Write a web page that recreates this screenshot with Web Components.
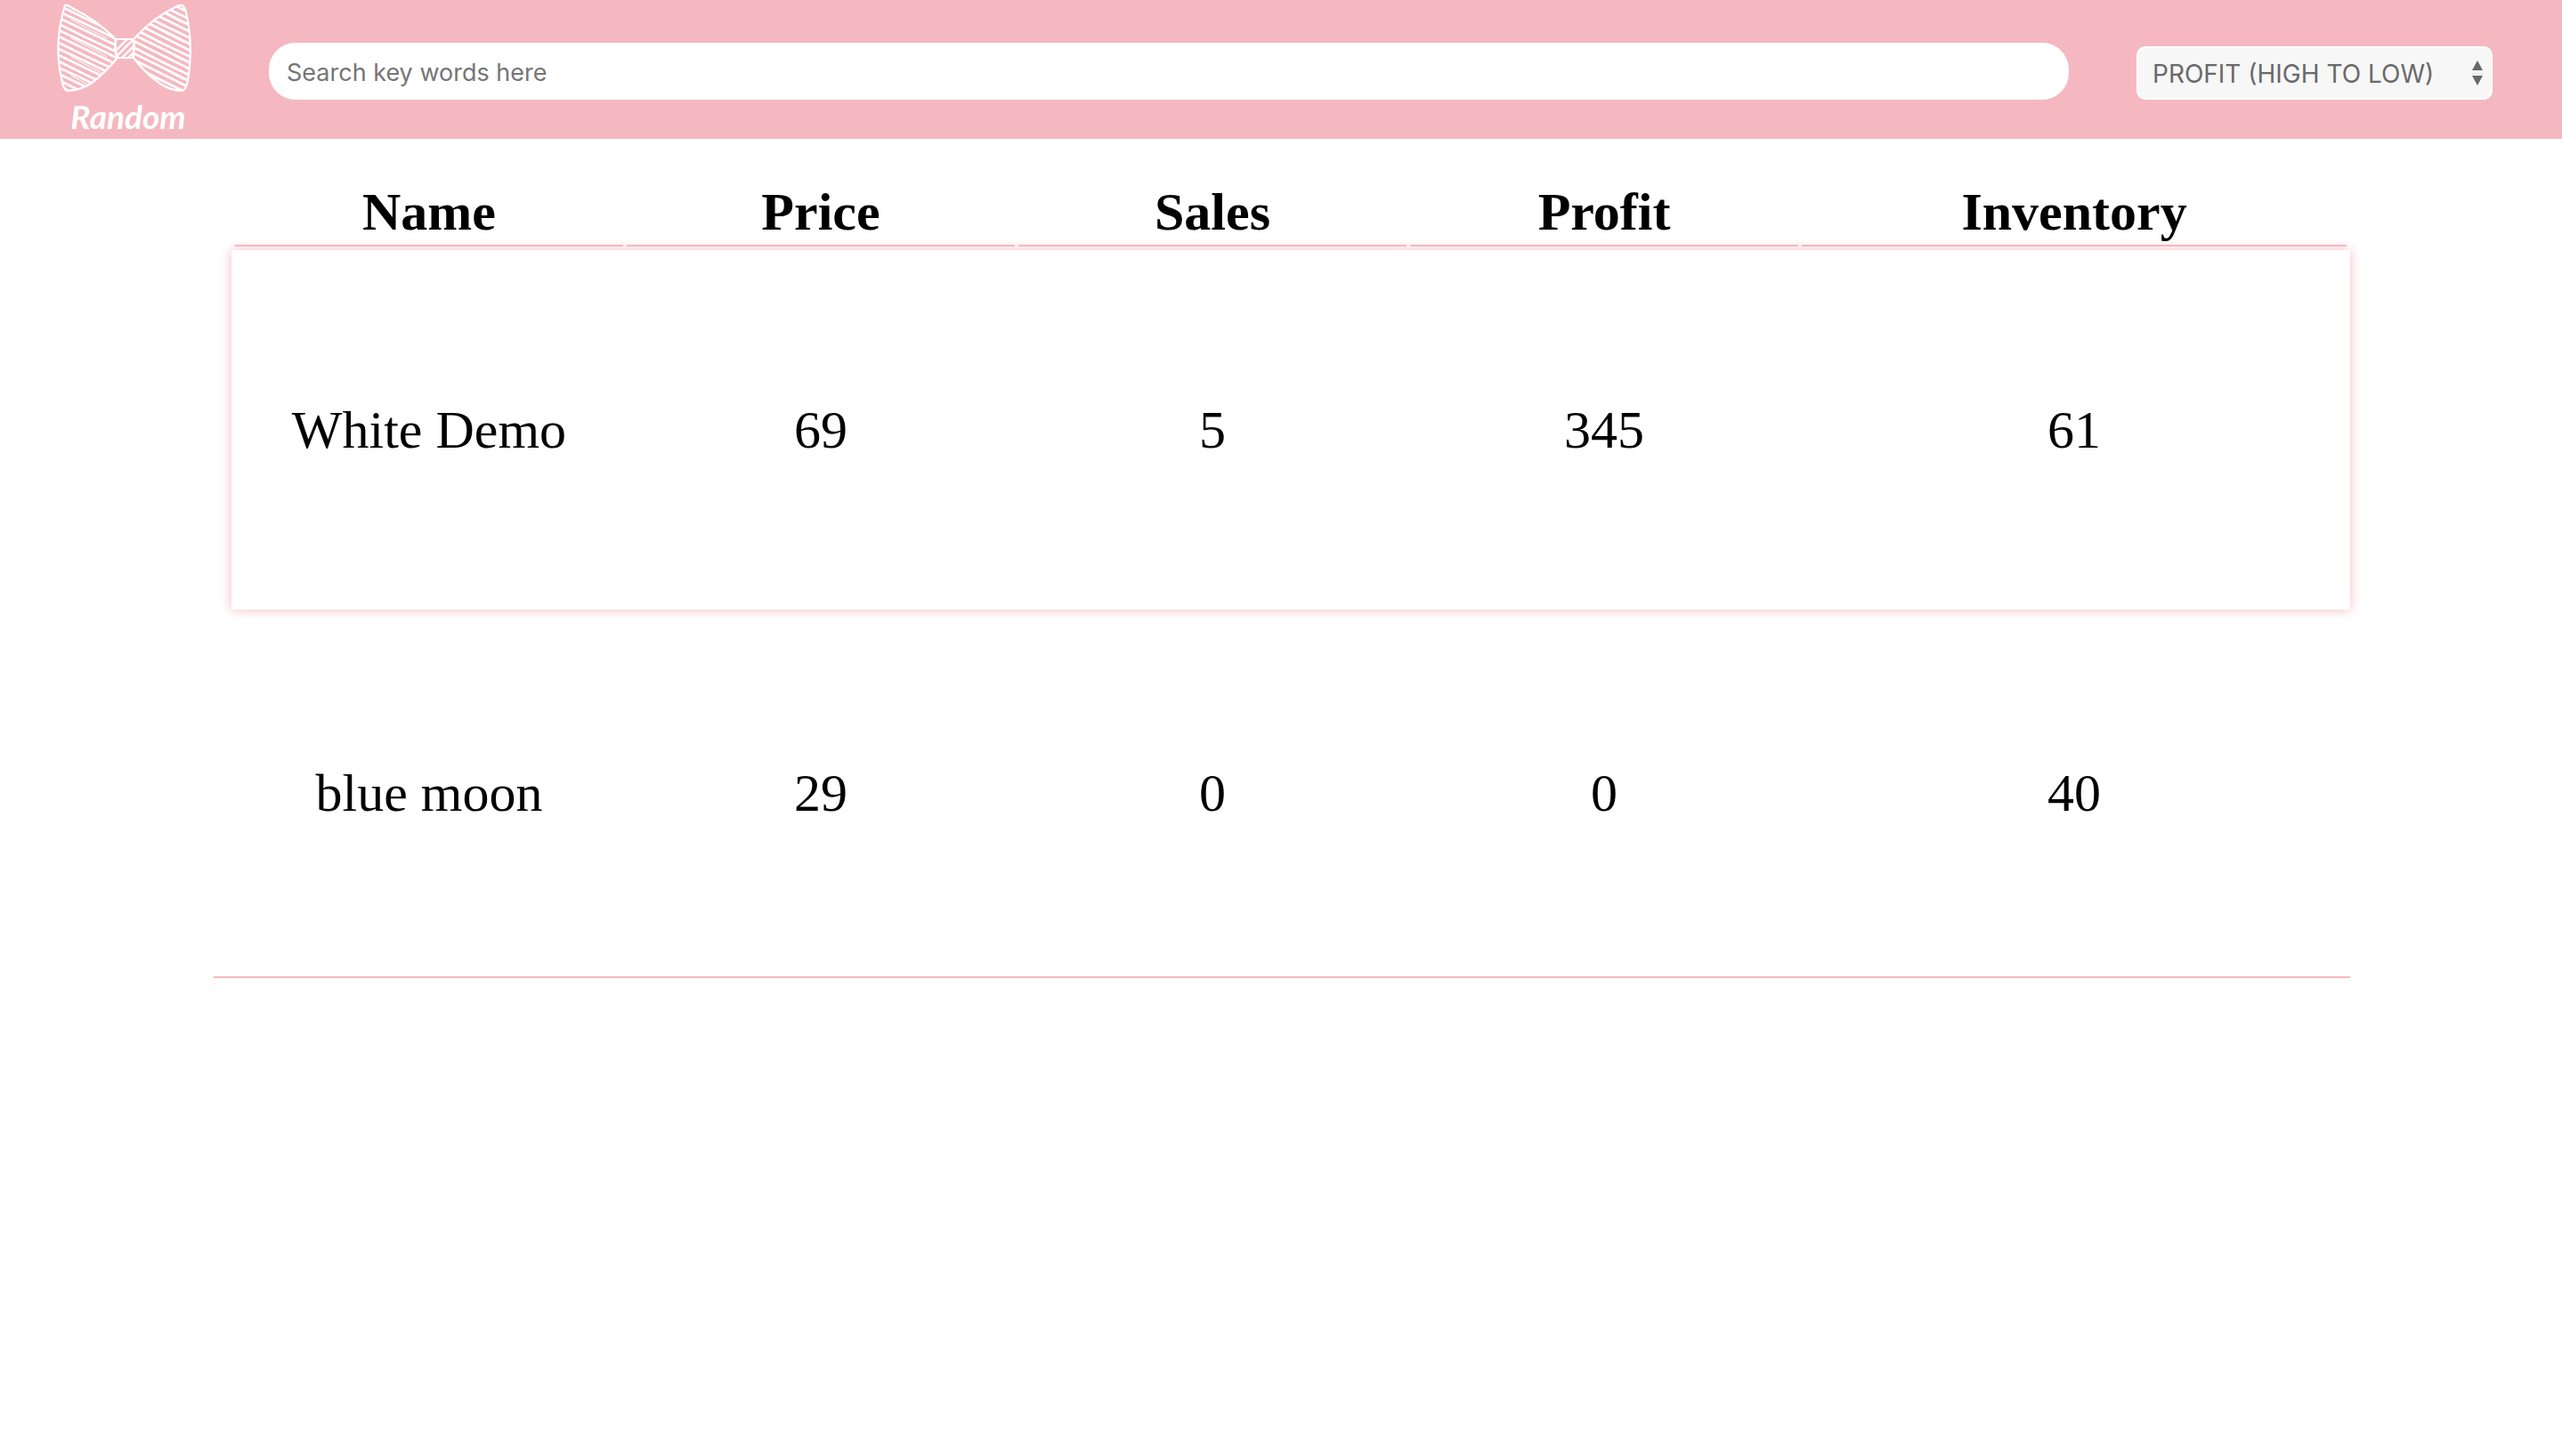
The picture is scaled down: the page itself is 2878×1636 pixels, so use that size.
<!DOCTYPE html>
<html lang="en">
<head>
<meta charset="utf-8">
<title>Random</title>
<style>
  body { margin: 0; background: #fff; color: #000; font-family: "Liberation Serif", "Times New Roman", serif; --brand: #f5b8c0; }
</style>
</head>
<body>
<shop-page></shop-page>
<script>
  class ShopLogo extends HTMLElement {
    connectedCallback() {
      const hatch = (x0, x1, y0, y1, slope, step, weight) => {
        let d = "";
        for (let y = y0, i = 0; y < y1; y += step, i++) {
          const a = (i * 7) % 3 - 1;
          d += `M${x0} ${y}Q${(x0 + x1) / 2} ${y + (x1 - x0) * slope / 2 + a} ${x1} ${y + (x1 - x0) * slope}`;
        }
        return `<path d="${d}" stroke-width="${weight}"/>`;
      };
      const left = "M33 6Q36 5 41 9Q68 22 89 43L91 66Q77 83 62 94Q49 102 35 102Q31 100 29 88Q20 48 33 6Z";
      const right = "M165 6Q161 5 155 9Q132 20 110 44L110 65Q124 83 140 94Q152 102 165 102Q169 100 171 90Q178 48 168 10Z";
      this.attachShadow({ mode: "open" }).innerHTML = `
        <style>
          :host { display: block; }
          a { display: flex; flex-direction: column; align-items: center; color: #fff; text-decoration: none; }
          svg { display: block; width: 200px; height: 108px; }
          span { padding-left: 8px; font: italic 700 37px/46px Lato, sans-serif; }
        </style>
        <a href="#">
          <svg viewBox="0 0 200 108" fill="none" stroke="#fff" stroke-linecap="round" stroke-linejoin="round" aria-hidden="true">
            <defs>
              <clipPath id="l"><path d="${left}"/></clipPath>
              <clipPath id="r"><path d="${right}"/></clipPath>
              <clipPath id="k"><path d="M91 44H110V65H92Z"/></clipPath>
            </defs>
            <g clip-path="url(#l)">${hatch(24, 94, -30, 102, .48, 7, 2.7)}${hatch(40, 80, -20, 90, .52, 21, 1)}</g>
            <g clip-path="url(#r)">${hatch(106, 178, -26, 100, .5, 7, 2.7)}${hatch(118, 165, -20, 90, .53, 21, 1)}</g>
            <g clip-path="url(#k)" stroke-width="2.4"><path d="M88 59L106 41M88 66L112 42M92 70L116 46M99 70L116 53"/></g>
            <path d="${left}" stroke-width="2.2"/>
            <path d="${right}" stroke-width="2.2"/>
            <path d="M91 44H110Q112 54 109 65H93Q86 56 91 44Z" stroke-width="2.2"/>
          </svg>
          <span>Random</span>
        </a>`;
    }
  }
  customElements.define("shop-logo", ShopLogo);

  class ShopSearch extends HTMLElement {
    connectedCallback() {
      this.attachShadow({ mode: "open" }).innerHTML = `
        <style>
          :host { display: block; }
          input { display: block; box-sizing: border-box; width: 100%; height: 64px; margin: 0; padding: 2px 20px 0; border: 0; border-radius: 30px; outline: 0; background: #fff; font: 27px Inter, sans-serif; }
          input::placeholder { color: #757575; opacity: 1; }
        </style>
        <input type="text" aria-label="Search" placeholder="Search key words here">`;
    }
  }
  customElements.define("shop-search", ShopSearch);

  class ShopSort extends HTMLElement {
    connectedCallback() {
      this.attachShadow({ mode: "open" }).innerHTML = `
        <style>
          :host { display: grid; align-items: center; }
          select, svg { grid-area: 1 / 1; }
          select { appearance: none; box-sizing: border-box; width: 100%; height: 60px; margin: 0; padding: 2px 40px 0 16px; border: 2px solid #fff; border-radius: 10px; background: #f7f7f7; color: #696969; font: 28px Inter, sans-serif; }
          svg { justify-self: end; width: 14px; height: 28px; margin-right: 10px; pointer-events: none; }
        </style>
        <select aria-label="Sort by"><option>PROFIT (HIGH TO LOW)</option></select>
        <svg viewBox="0 0 14 28" aria-hidden="true"><path d="M7 0L13 11H1ZM1 17H13L7 28Z" fill="#696969"/><path d="M0 15H14" stroke="#ddd"/></svg>`;
    }
  }
  customElements.define("shop-sort", ShopSort);

  class ShopHeader extends HTMLElement {
    connectedCallback() {
      this.attachShadow({ mode: "open" }).innerHTML = `
        <style>
          :host { display: block; background: var(--brand); }
          header { display: flex; align-items: flex-start; height: 156px; padding: 0 78px 0 40px; }
          shop-logo { width: 200px; }
          shop-search { flex: 1; margin: 48px 76px 0 62px; }
          shop-sort { width: 400px; margin-top: 52px; }
        </style>
        <header><shop-logo></shop-logo><shop-search></shop-search><shop-sort></shop-sort></header>`;
    }
  }
  customElements.define("shop-header", ShopHeader);

  class ProductTable extends HTMLElement {
    connectedCallback() {
      const columns = ["Name", "Price", "Sales", "Profit", "Inventory"];
      const rows = [["White Demo", 69, 5, 345, 61], ["blue moon", 29, 0, 0, 40]];
      this.attachShadow({ mode: "open" }).innerHTML = `
        <style>
          :host { display: block; padding-left: 20px; border-bottom: 2px solid var(--brand); }
          table { width: 100%; table-layout: fixed; border-collapse: separate; border-spacing: 0 4px; font-size: 60px; text-align: center; }
          th, td { box-sizing: border-box; padding: 2px; }
          th { width: 18.49%; padding-bottom: 0; }
          th:first-child { width: 18.57%; }
          th:last-child { width: auto; }
          th:first-child, td:first-child { padding-left: 4px; }
          th:last-child, td:last-child { padding-right: 4px; }
          th span { display: block; padding-bottom: 2px; border-bottom: 2px solid var(--brand); }
          td { height: 404px; }
          tr.active { box-shadow: 0 0 12px var(--brand); }
        </style>
        <table>
          <thead><tr>${columns.map(c => `<th scope="col"><span>${c}</span></th>`).join("")}</tr></thead>
          <tbody>${rows.map((r, i) => `<tr${i ? "" : ' class="active"'}>${r.map(v => `<td>${v}</td>`).join("")}</tr>`).join("")}</tbody>
        </table>`;
    }
  }
  customElements.define("product-table", ProductTable);

  class ShopPage extends HTMLElement {
    connectedCallback() {
      this.attachShadow({ mode: "open" }).innerHTML = `
        <style>
          :host { display: block; }
          main { padding: 42px 238px 0 240px; }
        </style>
        <shop-header></shop-header>
        <main><product-table></product-table></main>`;
    }
  }
  customElements.define("shop-page", ShopPage);
</script>
</body>
</html>
